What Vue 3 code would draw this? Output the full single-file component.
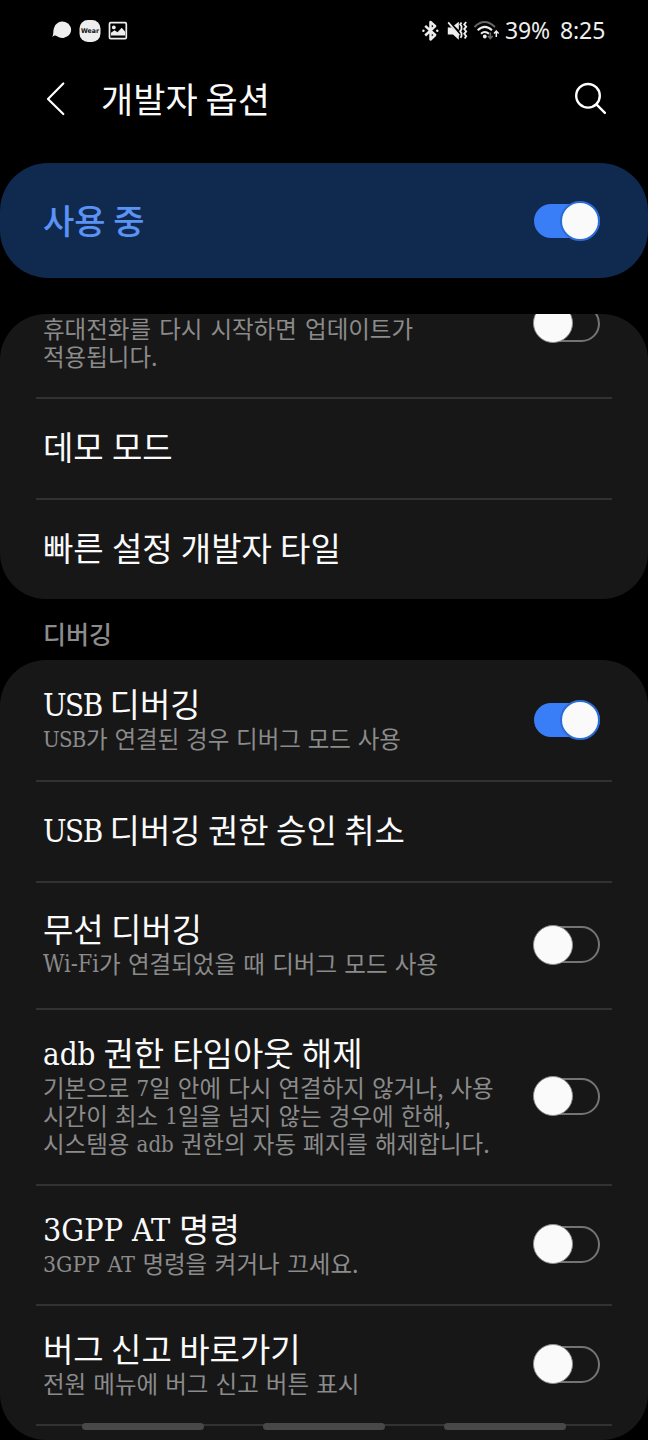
<script setup>
const first = [
  { id: 'upd', lines: ['휴대전화를 다시 시작하면 업데이트가', '적용됩니다.'], toggle: 'off' },
  { id: 'demo', title: '데모 모드' },
  { id: 'tile', title: '빠른 설정 개발자 타일' },
]
const second = [
  { id: 'usb', title: 'USB 디버깅', lines: ['USB가 연결된 경우 디버그 모드 사용'], toggle: 'on' },
  { id: 'revoke', title: 'USB 디버깅 권한 승인 취소' },
  { id: 'wifi', title: '무선 디버깅', lines: ['Wi-Fi가 연결되었을 때 디버그 모드 사용'], toggle: 'off' },
  {
    id: 'adb',
    title: 'adb 권한 타임아웃 해제',
    lines: ['기본으로 7일 안에 다시 연결하지 않거나, 사용', '시간이 최소 1일을 넘지 않는 경우에 한해,', '시스템용 adb 권한의 자동 폐지를 해제합니다.'],
    toggle: 'off',
  },
  { id: 'gpp', title: '3GPP AT 명령', lines: ['3GPP AT 명령을 켜거나 끄세요.'], toggle: 'off' },
  { id: 'bug', title: '버그 신고 바로가기', lines: ['전원 메뉴에 버그 신고 버튼 표시'], toggle: 'off' },
]
const sections = [
  { id: 'a', rows: first },
  { id: 'b', heading: '디버깅', rows: second },
]
// Wraps Latin letters and digits so they can take the serif face.
const runs = (s) => s.split(/([A-Za-z0-9][A-Za-z0-9-]*)/).filter(Boolean).map((t) => ({ t, latin: /^[A-Za-z0-9]/.test(t) }))
</script>

<template>
  <div class="screen">
    <header class="status">
      <svg class="left" width="80" height="24" viewBox="0 0 80 24">
        <path d="M2 18.300C3.800 16 2.900 12.600 3.800 9.400A8.700 8.200 0 1 1 7 17.200C5.500 16.200 4 16.200 2 18.300Z" fill="#eee" />
        <rect x="29.500" y="1" width="21" height="22" rx="8.500" fill="#eee" />
        <text x="40" y="14.400" text-anchor="middle" textLength="18" lengthAdjust="spacingAndGlyphs" class="wear">Wear</text>
        <rect x="59.500" y="3.700" width="16.800" height="16" rx="1.200" fill="none" stroke="#eee" stroke-width="1.700" />
        <circle cx="63.800" cy="8.400" r="1.900" fill="#eee" />
        <path d="M61 16.500v-2.700l3.500-2.600 3 2.100 4.200-4.600 3.500 4v3.800z" fill="#eee" />
      </svg>
      <div class="right">
        <svg width="82" height="24" viewBox="0 0 82 24">
          <path d="M4.200 6.800l10 9.200-4.700 4.500V2.900l4.700 4.300-10 9.300" fill="none" stroke="#eee" stroke-width="2.500" stroke-linejoin="round" />
          <circle cx="2.400" cy="11.700" r="1.200" fill="#eee" />
          <circle cx="16.300" cy="11.700" r="1.200" fill="#eee" />
          <path d="M26.800 8.500h3.500l7.500 7v5.200l-5.800-5.200h-5.200z" fill="#eee" />
          <path d="M33 6.500l4.800-3.800v8.400z" fill="#eee" />
          <path d="M27.200 3.400l11 13" stroke="#eee" stroke-width="1.700" />
          <path d="M40.500 3.500l-1.300 2 1.300 1.800v3l-1.300 2 1.300 1.800v3l-1 1.700M45.200 3l-2 2.400 2 2.300-2 2.400 2 2.300-2 2.400 2 2.300-1.500 2.400" fill="none" stroke="#eee" stroke-width="1.800" />
          <g fill="none" stroke-width="2">
            <path d="M53.500 8Q63.500-2 74 8" stroke="#666" />
            <path d="M56.700 11.300Q63.800 4.500 71 11.300M60 14.800Q63.800 11.200 68 14.800" stroke="#eee" />
            <path d="M69.300 13.500v6M67 17l2.300 2.500 2.300-2.500" stroke="#666" stroke-width="1.700" />
            <path d="M75.300 18v-6M73 14.500l2.300-2.500 2.300 2.500" stroke="#eee" stroke-width="1.500" />
          </g>
          <circle cx="63.800" cy="17.500" r="1.900" fill="#eee" />
        </svg>
        <span class="battery">39%</span><span class="clock">8:25</span>
      </div>
    </header>

    <nav class="bar">
      <svg class="back" width="20" height="36" viewBox="0 0 20 36"><path d="M17.300 2.500L2 18l15.300 15" fill="none" stroke="#fff" stroke-width="2.200" stroke-linecap="round" stroke-linejoin="round" /></svg>
      <h1>개발자 옵션</h1>
      <svg class="search" width="36" height="36" viewBox="0 0 36 36" fill="none" stroke="#fff" stroke-width="2.400" stroke-linecap="round"><circle cx="15" cy="14.800" r="11.800" /><path d="M23.400 23.400l8.500 8.500" /></svg>
    </nav>

    <section class="hero">
      <span>사용 중</span>
      <i class="toggle on"><b></b></i>
    </section>

    <template v-for="s in sections" :key="s.id">
      <h2 v-if="s.heading">{{ s.heading }}</h2>
      <section class="card" :class="s.id">
        <div v-for="r in s.rows" :key="r.id" class="row" :class="r.id">
          <div class="copy">
            <div v-if="r.title" class="title"><span v-for="(x, i) in runs(r.title)" :key="i" :class="{ latin: x.latin }">{{ x.t }}</span></div>
            <div v-for="l in r.lines" :key="l" class="line"><span v-for="(x, i) in runs(l)" :key="i" :class="{ latin: x.latin }">{{ x.t }}</span></div>
          </div>
          <i v-if="r.toggle" class="toggle" :class="r.toggle"><b></b></i>
        </div>
        <div v-if="s.id === 'b'" class="gestures"><i></i><i></i><i></i></div>
      </section>
    </template>
  </div>
</template>

<style>
html, body { background: #000; }
</style>
<style scoped>
*, *::before { box-sizing: border-box; }
.screen { width: 648px; height: 1440px; overflow: hidden; background: #000; color: #fafafa; font-family: "Noto Sans CJK KR", sans-serif; display: flex; flex-direction: column; }
.status { height: 62px; flex: none; display: flex; justify-content: space-between; padding: 19px 43px 0 50px; }
.wear { font: bold 6.500px "DejaVu Sans", sans-serif; fill: #111; }
.right { display: flex; }
.battery, .clock { font: 23px/22px "Noto Sans", sans-serif; color: #eee; white-space: nowrap; }
.battery { width: 45px; margin-left: 2px; letter-spacing: -.1px; }
.clock { width: 45px; margin-left: 10px; letter-spacing: -.1px; }
.bar { height: 101px; flex: none; display: flex; align-items: flex-start; padding: 19px 39px 0 46px; }
h1 { margin: -5px 0 0 35px; font-size: 35px; line-height: 44px; font-weight: 400; white-space: pre; }
.search { margin-left: auto; }
.hero { height: 115px; flex: none; border-radius: 48px; background: #10294f; display: flex; align-items: center; justify-content: space-between; padding: 0 48px 0 43px; margin-bottom: 36px; color: #5b93f5; font-size: 34px; font-weight: 500; }
.hero span { margin-top: -3px; }
.card { background: #171717; border-radius: 46px; flex: none; overflow: hidden; }
.card.a { height: 285px; }
.card.b { height: 780px; position: relative; }
h2 { margin: 0; height: 61px; flex: none; padding: 16px 0 0 43px; font-size: 25px; line-height: 36px; font-weight: 500; color: #8c8c8c; }
.row { margin: 0 36px; padding: 0 12px 0 7px; border-bottom: 2px solid #323232; display: flex; align-items: center; justify-content: space-between; }
.title { font-size: 33px; line-height: 40px; white-space: pre; margin-top: -6px; }
.title + .line { margin-top: 1px; }
.line { font-size: 23.500px; line-height: 28px; white-space: pre; color: #8b8b8b; word-spacing: 1.800px; }
.latin { font-family: "DejaVu Serif Condensed", "DejaVu Serif", serif; font-size: .94em; line-height: 1; vertical-align: 1px; }
.upd { height: 85px; align-items: flex-start; }
.upd .line { word-spacing: 2.800px; }
.demo { height: 101px; }
.tile { height: 99px; border: 0; }
.demo .title, .tile .title { word-spacing: .8px; }
.usb { height: 122px; }
.revoke { height: 101px; }
.usb .latin, .revoke .latin { letter-spacing: -1.500px; margin-right: .5px; }
.usb .line .latin { letter-spacing: -.8px; }
.usb .line { word-spacing: 1.500px; }
.wifi { height: 127px; }
.adb { height: 176px; }
.adb .title { word-spacing: .7px; }
.gpp { height: 120px; }
.gpp .latin { font-size: .97em; }
.gpp .title { word-spacing: 1.500px; }
.gpp .line { word-spacing: 2.300px; }
.wifi .latin { font-size: .99em; }
.wifi .line { word-spacing: 2px; }
.bug { height: 120px; }
.toggle { flex: none; width: 66px; height: 40px; display: flex; align-items: center; position: relative; top: -1px; }
.hero .toggle, .usb .toggle, .upd .toggle { top: 0; }
.toggle::before { content: ""; width: 100%; height: 37px; border: 2px solid #747474; border-radius: 20px; }
.toggle b { position: absolute; left: -1px; top: 0; width: 40px; height: 40px; border-radius: 50%; background: #fafafa; border: 1.500px solid #8e8e8e; }
.toggle.on::before { height: 34px; border: 0; background: #397ef7; }
.toggle.on b { left: 26px; border: 2px solid #2b6bd5; }
.upd .toggle { margin-top: -11px; }
.gestures { position: absolute; left: 82px; right: 82px; bottom: 10px; display: flex; justify-content: space-between; }
.gestures i { width: 122px; height: 7px; border-radius: 4px; background: #484848; }
</style>
